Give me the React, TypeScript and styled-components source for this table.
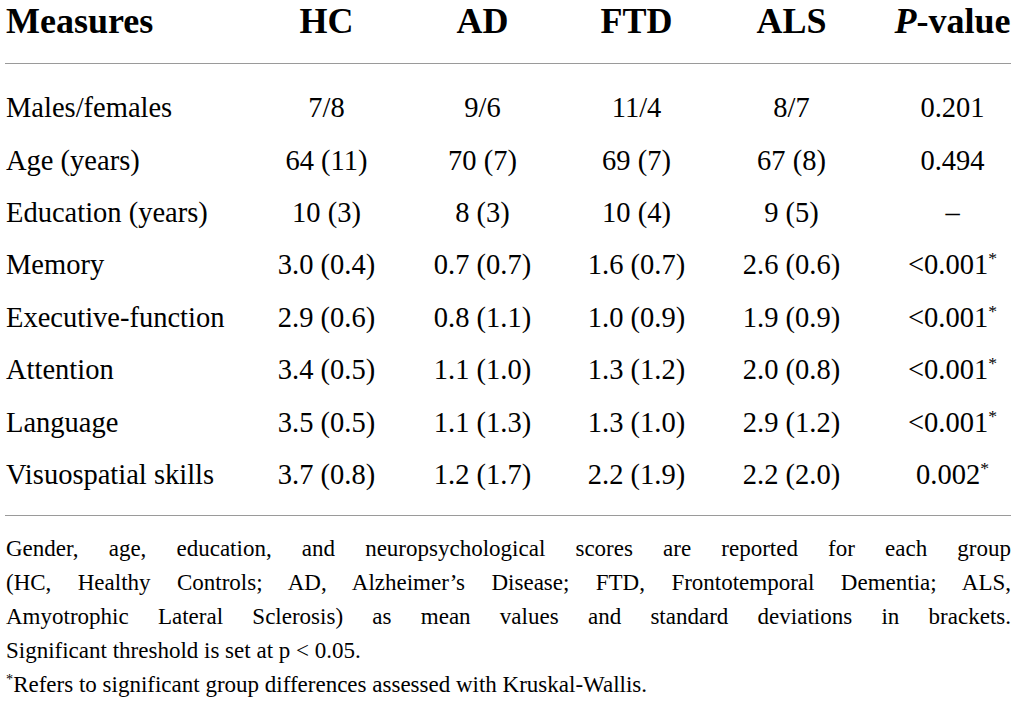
import React from "react";
import styled, { createGlobalStyle } from "styled-components";

const Global = createGlobalStyle`
  html, body { margin: 0; padding: 0; background: #fff; overflow: hidden; }
  body { font-family: "Liberation Serif", "Times New Roman", serif; color: #000; }
`;

const Page = styled.div`
  width: 1006px;
  margin-left: 5px;
`;

const COLS = "243px 157px 155px 153px 157px 141px";

const HeadRow = styled.div`
  display: grid;
  grid-template-columns: ${COLS};
  height: 63px;
  border-bottom: 1.5px solid #9a9a9a;
  font-weight: bold;
  font-size: 36px;
  line-height: 42px;
`;

const Body = styled.div`
  padding: 18px 0 14px;
  border-bottom: 1.5px solid #9a9a9a;
`;

const Row = styled.div`
  display: grid;
  grid-template-columns: ${COLS};
  height: 52.4px;
  align-items: center;
  font-size: 28.5px;
`;

const Cell = styled.div<{ $first?: boolean; $last?: boolean }>`
  text-align: ${(p) => (p.$first ? "left" : "center")};
  padding-left: ${(p) => (p.$first ? "1px" : p.$last ? "24px" : "0")};
  white-space: nowrap;
`;

const Star = styled.span`
  font-size: 0.62em;
  vertical-align: 0.55em;
  line-height: 0;
`;

const Notes = styled.div`
  padding: 16px 0 0 1px;
  font-size: 23px;
  line-height: 34px;
`;

const Line = styled.div<{ $justify?: boolean }>`
  text-align: ${(p) => (p.$justify ? "justify" : "left")};
  text-align-last: ${(p) => (p.$justify ? "justify" : "left")};
`;

type R = [string, string, string, string, string, string, boolean?];

const rows: R[] = [
  ["Males/females", "7/8", "9/6", "11/4", "8/7", "0.201"],
  ["Age (years)", "64 (11)", "70 (7)", "69 (7)", "67 (8)", "0.494"],
  ["Education (years)", "10 (3)", "8 (3)", "10 (4)", "9 (5)", "–"],
  ["Memory", "3.0 (0.4)", "0.7 (0.7)", "1.6 (0.7)", "2.6 (0.6)", "<0.001", true],
  ["Executive-function", "2.9 (0.6)", "0.8 (1.1)", "1.0 (0.9)", "1.9 (0.9)", "<0.001", true],
  ["Attention", "3.4 (0.5)", "1.1 (1.0)", "1.3 (1.2)", "2.0 (0.8)", "<0.001", true],
  ["Language", "3.5 (0.5)", "1.1 (1.3)", "1.3 (1.0)", "2.9 (1.2)", "<0.001", true],
  ["Visuospatial skills", "3.7 (0.8)", "1.2 (1.7)", "2.2 (1.9)", "2.2 (2.0)", "0.002", true],
];

export default function App() {
  return (
    <Page>
      <Global />
      <HeadRow>
        <Cell $first>Measures</Cell>
        <Cell>HC</Cell>
        <Cell>AD</Cell>
        <Cell>FTD</Cell>
        <Cell>ALS</Cell>
        <Cell $last>
          <i>P</i>-value
        </Cell>
      </HeadRow>
      <Body>
        {rows.map((r) => (
          <Row key={r[0]}>
            <Cell $first>{r[0]}</Cell>
            <Cell>{r[1]}</Cell>
            <Cell>{r[2]}</Cell>
            <Cell>{r[3]}</Cell>
            <Cell>{r[4]}</Cell>
            <Cell $last>
              {r[5]}
              {r[6] && <Star>*</Star>}
            </Cell>
          </Row>
        ))}
      </Body>
      <Notes>
        <Line $justify>
          Gender, age, education, and neuropsychological scores are reported for each group
        </Line>
        <Line $justify>
          (HC, Healthy Controls; AD, Alzheimer’s Disease; FTD, Frontotemporal Dementia; ALS,
        </Line>
        <Line $justify>
          Amyotrophic Lateral Sclerosis) as mean values and standard deviations in brackets.
        </Line>
        <Line>Significant threshold is set at p &lt; 0.05.</Line>
        <Line>
          <Star>*</Star>Refers to significant group differences assessed with Kruskal-Wallis.
        </Line>
      </Notes>
    </Page>
  );
}
